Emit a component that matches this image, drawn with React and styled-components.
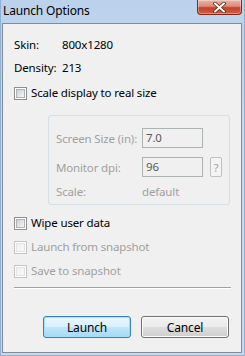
import React from 'react'
import styled, { createGlobalStyle } from 'styled-components'

const Global = createGlobalStyle`
  html, body {
    margin: 0;
    padding: 0;
    background: #c4d8ee;
  }
  body {
    font-family: "Noto Sans", "DejaVu Sans", sans-serif;
    font-size: 11.5px;
    letter-spacing: -0.15px;
  }
`

const Window = styled.div`
  width: 245px;
  height: 356px;
  box-sizing: border-box;
  display: flex;
  flex-direction: column;
  background: linear-gradient(180deg, #bcd2ec 0%, #c6dbf1 40%, #c4d9ef 100%);
  border-left: 1px solid #8fb0d4;
  border-right: 1px solid #8fb0d4;
  border-bottom: 1px solid #8fb0d4;
  overflow: hidden;
`

const TitleBar = styled.div`
  height: 23px;
  display: flex;
  align-items: flex-start;
  justify-content: space-between;
  padding-left: 2px;
  padding-right: 2px;
`

const Title = styled.div`
  margin-top: 3px;
  font-size: 12px;
  color: #000;
  line-height: 16px;
`

const CloseButton = styled.div`
  width: 45px;
  height: 15px;
  box-sizing: border-box;
  border: 1px solid #7d2a1c;
  border-top: none;
  border-radius: 0 0 4px 4px;
  background: linear-gradient(180deg, #eab3a6 0%, #dc8a76 45%, #c4412a 55%, #d25c3f 100%);
  box-shadow: inset 0 0 0 1px rgba(255, 255, 255, 0.35);
  display: flex;
  align-items: center;
  justify-content: center;
`

const Panel = styled.div`
  flex: 1;
  margin: 0 2px 2px 1px;
  background: #f0f0f0;
  border: 1px solid #838b96;
  display: flex;
  flex-direction: column;
  padding: 13px 10px 0 11px;
`

const InfoRow = styled.div`
  display: flex;
  height: 16px;
  line-height: 16px;
  margin-top: ${p => p.$gap || 0}px;
  color: #000;
`

const InfoLabel = styled.span`
  width: 48px;
  flex-shrink: 0;
  white-space: nowrap;
`

const CheckRow = styled.label`
  display: flex;
  align-items: center;
  height: 16px;
  line-height: 16px;
  margin-top: ${p => p.$gap || 0}px;
  color: ${p => (p.$disabled ? '#a0a0a0' : '#000')};
`

const Box = styled.span`
  width: 13px;
  height: 13px;
  flex-shrink: 0;
  box-sizing: border-box;
  margin-right: 4px;
  border: 1px solid ${p => (p.$disabled ? '#c6c6c6' : '#8e8f8f')};
  background: #fff;
  display: flex;
  align-items: center;
  justify-content: center;

  &::after {
    content: '';
    width: 9px;
    height: 9px;
    box-sizing: border-box;
    border: 1px solid ${p => (p.$disabled ? '#e4e4e4' : '#aeb3b9')};
    background: ${p =>
      p.$disabled
        ? 'linear-gradient(135deg, #f0f0f0, #f8f8f8)'
        : 'linear-gradient(135deg, #cbcfd5, #f6f6f6)'};
  }
`

const Group = styled.div`
  margin: 14px 1px 0 34px;
  height: 90px;
  box-sizing: border-box;
  border: 1px solid #d5dfe5;
  border-radius: 3px;
  padding: 12px 7px 0 7px;
  display: flex;
  flex-direction: column;
`

const FieldRow = styled.div`
  display: flex;
  align-items: center;
  height: ${p => p.$h || 20}px;
  margin-top: ${p => p.$gap || 0}px;
  color: #a0a0a0;
`

const FieldLabel = styled.span`
  width: 86px;
  flex-shrink: 0;
  white-space: nowrap;
`

const Input = styled.div`
  width: 61px;
  height: 20px;
  flex-shrink: 0;
  box-sizing: border-box;
  border: 1px solid #adb2b5;
  background: #f0f0f0;
  color: #5a5a5a;
  padding-left: 3px;
  line-height: 18px;
`

const HelpButton = styled.div`
  width: 14px;
  height: 20px;
  box-sizing: border-box;
  margin-left: 7px;
  border: 1px solid #c0c0c0;
  border-radius: 2px;
  background: #f4f4f4;
  color: #a0a0a0;
  font-size: 11px;
  display: flex;
  align-items: center;
  justify-content: center;
`

const Separator = styled.div`
  margin-top: 8px;
  height: 0;
  border-top: 1px solid #a0a0a0;
  border-bottom: 1px solid #fff;
`

const ButtonRow = styled.div`
  display: flex;
  justify-content: flex-end;
  gap: 10px;
  margin-top: 27px;
  padding-right: 2px;
`

const Button = styled.div`
  width: 88px;
  height: 22px;
  box-sizing: border-box;
  border: 1px solid ${p => (p.$primary ? '#3c7fb1' : '#707070')};
  border-radius: 3px;
  background: ${p =>
    p.$primary
      ? 'linear-gradient(180deg, #eaf6fd 0%, #d9f0fc 48%, #bee6fd 52%, #a7d9f5 100%)'
      : 'linear-gradient(180deg, #f2f2f2 0%, #ebebeb 48%, #dddddd 52%, #cfcfcf 100%)'};
  box-shadow: inset 0 0 0 1px ${p => (p.$primary ? '#9fe0fb' : '#fcfcfc')};
  color: #000;
  font-size: 12px;
  display: flex;
  align-items: center;
  justify-content: center;
`

function CloseGlyph() {
  return (
    <svg width="13" height="11" viewBox="0 0 13 11">
      <path
        d="M2 1.5 L11 9.5 M11 1.5 L2 9.5"
        stroke="#5a2018"
        strokeWidth="3.6"
        strokeLinecap="round"
        fill="none"
      />
      <path
        d="M2 1.5 L11 9.5 M11 1.5 L2 9.5"
        stroke="#fff"
        strokeWidth="2"
        strokeLinecap="round"
        fill="none"
      />
    </svg>
  )
}

export default function App() {
  return (
    <>
      <Global />
      <Window>
        <TitleBar>
          <Title>Launch Options</Title>
          <CloseButton>
            <CloseGlyph />
          </CloseButton>
        </TitleBar>
        <Panel>
          <InfoRow>
            <InfoLabel>Skin:</InfoLabel>
            <span>800x1280</span>
          </InfoRow>
          <InfoRow $gap={7}>
            <InfoLabel>Density:</InfoLabel>
            <span>213</span>
          </InfoRow>
          <CheckRow $gap={9}>
            <Box />
            Scale display to real size
          </CheckRow>

          <Group>
            <FieldRow>
              <FieldLabel>Screen Size (in):</FieldLabel>
              <Input>7.0</Input>
            </FieldRow>
            <FieldRow $gap={9}>
              <FieldLabel>Monitor dpi:</FieldLabel>
              <Input>96</Input>
              <HelpButton>?</HelpButton>
            </FieldRow>
            <FieldRow $gap={6} $h={16}>
              <FieldLabel>Scale:</FieldLabel>
              <span>default</span>
            </FieldRow>
          </Group>

          <CheckRow $gap={10}>
            <Box />
            Wipe user data
          </CheckRow>
          <CheckRow $gap={8} $disabled>
            <Box $disabled />
            Launch from snapshot
          </CheckRow>
          <CheckRow $gap={8} $disabled>
            <Box $disabled />
            Save to snapshot
          </CheckRow>

          <Separator />

          <ButtonRow>
            <Button $primary>Launch</Button>
            <Button>Cancel</Button>
          </ButtonRow>
        </Panel>
      </Window>
    </>
  )
}
